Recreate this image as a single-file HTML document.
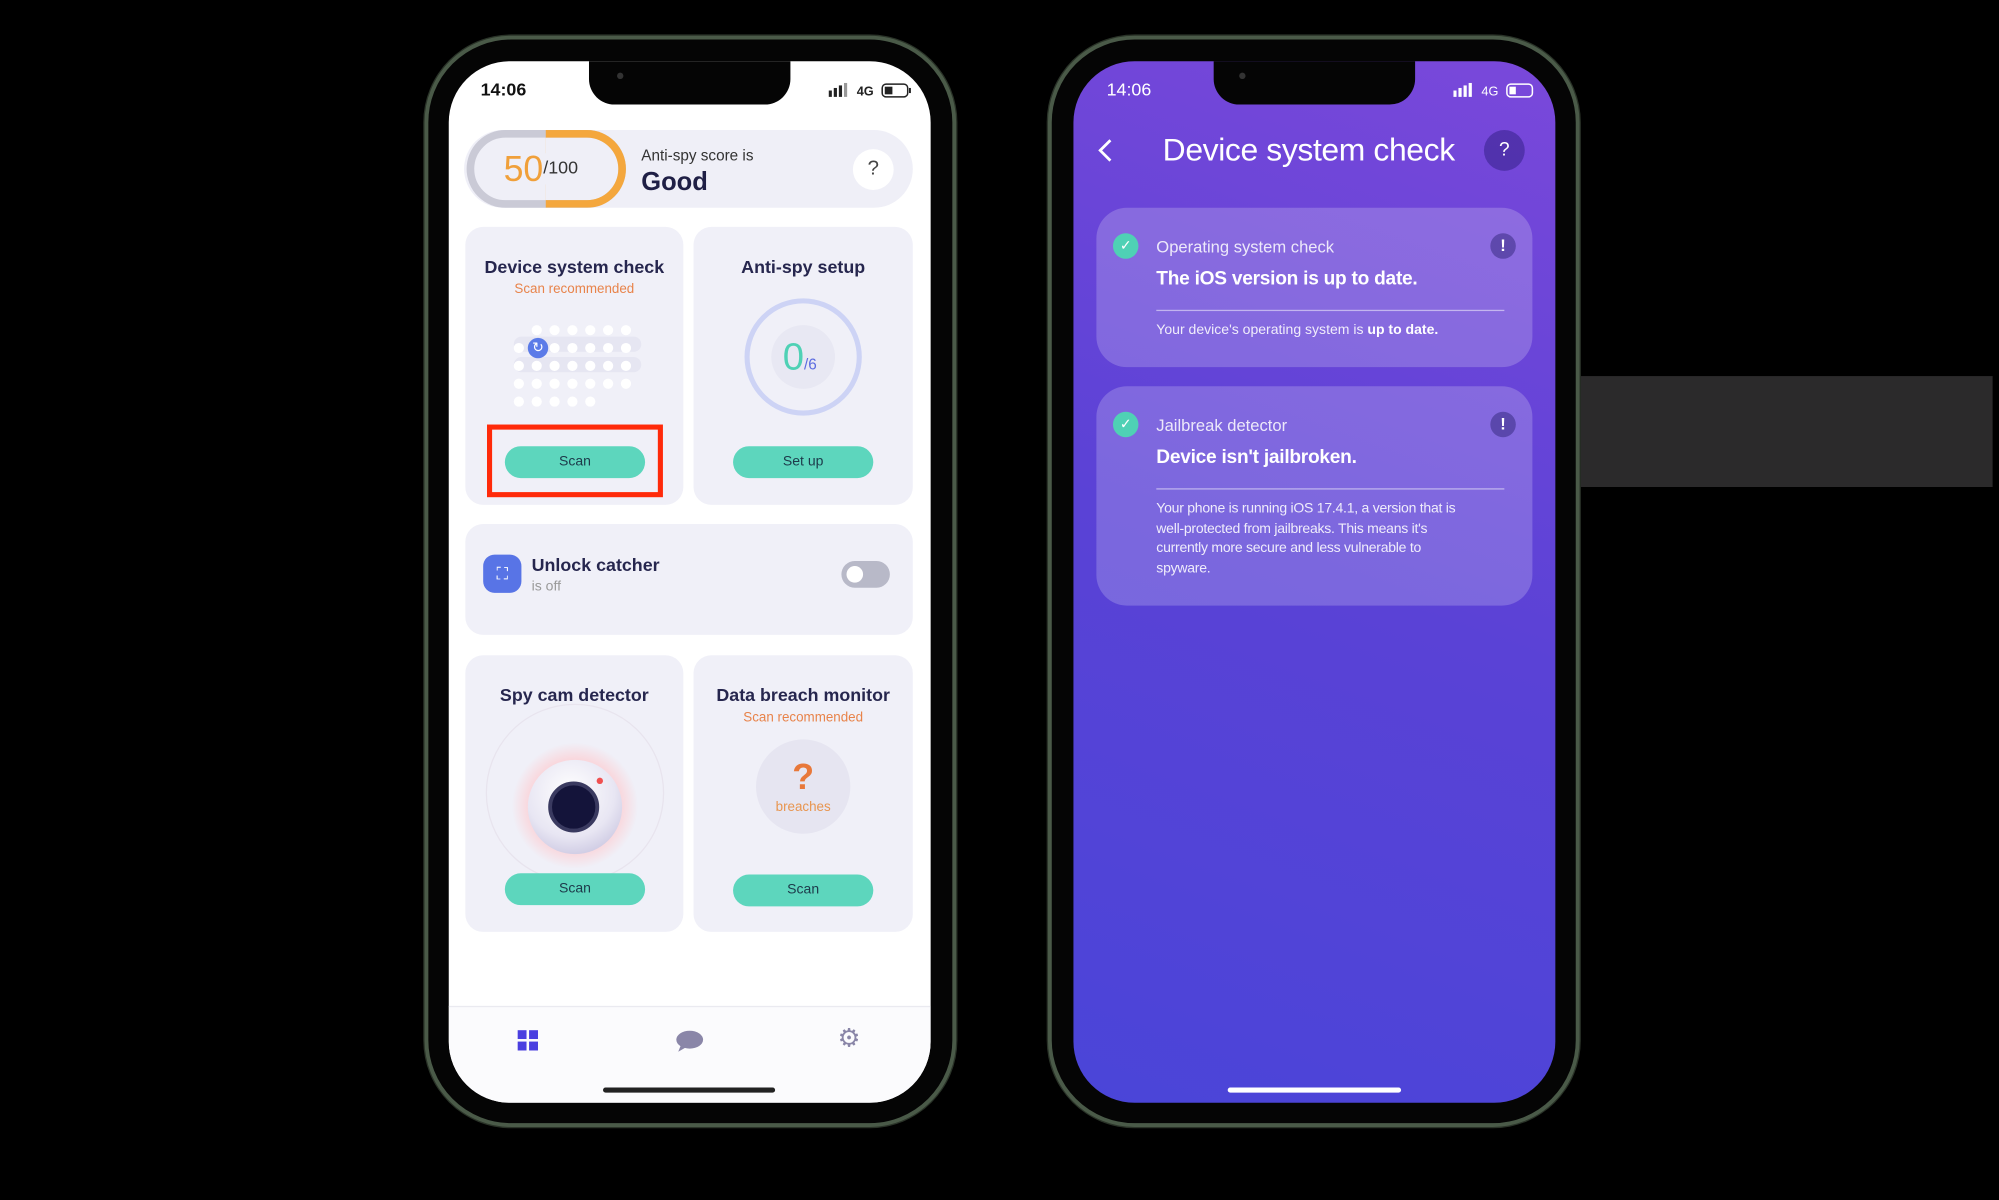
<!DOCTYPE html>
<html><head><meta charset="utf-8"><style>
*{margin:0;padding:0;box-sizing:border-box}
html,body{width:1999px;height:1200px;background:#000;overflow:hidden;font-family:"Liberation Sans",sans-serif}
#w{position:absolute;left:0;top:0;width:1568px;height:941px;transform:scale(1.27487);transform-origin:0 0}
.a{position:absolute}
.t{position:absolute;white-space:nowrap;line-height:1}
.frame{position:absolute;width:417px;height:856px;top:28px;border-radius:68px;background:#050505;border:3px solid #4a5a48;box-shadow:0 0 0 1px #2a3328}
.scr{position:absolute;top:48px;width:378px;height:817px;border-radius:48px;overflow:hidden}
.notch{position:absolute;top:-2px;left:110px;width:158px;height:36px;background:#050505;border-radius:0 0 20px 20px}
.card{position:absolute;background:#f0f0f8;border-radius:14px}
.ttl{position:absolute;width:100%;text-align:center;font-weight:bold;font-size:14px;color:#26264e;line-height:1}
.rec{position:absolute;width:100%;text-align:center;font-size:10.5px;color:#e8834a;line-height:1}
.btn{position:absolute;width:110px;height:25px;border-radius:13px;background:#5dd6bd;color:#1d3a4a;font-size:11px;text-align:center;line-height:25px}
.dot{position:absolute;width:8px;height:8px;border-radius:50%;background:#fff}
.rc{position:absolute;left:18px;width:342px;background:rgba(255,255,255,0.2);border-radius:24px}
.chk{position:absolute;left:13px;width:20px;height:20px;border-radius:50%;background:#4fd1b5;color:#fff;font-size:11px;text-align:center;line-height:20px}
.ex{position:absolute;left:309px;width:20px;height:20px;border-radius:50%;background:rgba(40,30,110,0.45);color:#fff;font-weight:bold;font-size:13px;text-align:center;line-height:20px}
</style></head><body><div id="w">

<div class="a" style="left:1240px;top:295px;width:323px;height:87px;background:#2b2a2b"></div>

<!-- LEFT PHONE -->
<div class="frame" style="left:333px"></div>
<div class="scr" style="left:352px;background:#fff">
  <div class="notch"></div>
  <div class="a" style="left:132px;top:9px;width:5px;height:5px;border-radius:50%;background:#333"></div>
  <div class="t" style="left:25px;top:15px;font-size:14px;font-weight:bold;color:#111">14:06</div>
  <svg class="a" style="left:298px;top:17px" width="66" height="12" viewBox="0 0 66 12">
    <g fill="#222"><rect x="0" y="6" width="2.5" height="5"/><rect x="4" y="4" width="2.5" height="7"/><rect x="8" y="2" width="2.5" height="9"/><rect x="12" y="0" width="2.5" height="11" fill="#999"/></g>
    <text x="22" y="10" font-size="10" font-family="Liberation Sans" font-weight="bold" fill="#222">4G</text>
    <rect x="42" y="1" width="20" height="10" rx="3" fill="none" stroke="#222" stroke-width="1.2"/><rect x="44" y="3" width="6" height="6" fill="#222"/><rect x="63" y="4" width="1.5" height="4" fill="#222"/>
  </svg>
  <div class="a" style="left:12px;top:54px;width:352px;height:61px;background:#efeff7;border-radius:31px"></div>
  <div class="a" style="left:14px;top:54px;width:125px;height:61px;border-radius:31px;border:6px solid #cacad6"></div>
  <div class="a" style="left:76px;top:54px;width:63px;height:61px;border-radius:0 31px 31px 0;border:6px solid #f4a73d;border-left:none"></div>
  <div class="t" style="left:43px;top:71px;font-size:28px;color:#f0a03a">50<span style="font-size:14px;color:#333;vertical-align:6px">/100</span></div>
  <div class="t" style="left:151px;top:68px;font-size:12px;color:#333">Anti-spy score is</div>
  <div class="t" style="left:151px;top:85px;font-size:20px;font-weight:bold;color:#1f1f45">Good</div>
  <div class="a" style="left:317px;top:69px;width:32px;height:32px;border-radius:50%;background:#fff;text-align:center;line-height:32px;font-size:16px;color:#444">?</div>

  <div class="card" style="left:13px;top:130px;width:171px;height:218px">
    <div class="ttl" style="top:24px">Device system check</div>
    <div class="rec" style="top:44px">Scan recommended</div>
    <div class="a" style="left:38px;top:86px;width:100px;height:12px;border-radius:6px;background:#e6e6f2"></div>
    <div class="a" style="left:38px;top:102px;width:100px;height:12px;border-radius:6px;background:#e6e6f2"></div>
    <div class="dot" style="left:52px;top:77px"></div><div class="dot" style="left:66px;top:77px"></div><div class="dot" style="left:80px;top:77px"></div><div class="dot" style="left:94px;top:77px"></div><div class="dot" style="left:108px;top:77px"></div><div class="dot" style="left:122px;top:77px"></div>
    <div class="dot" style="left:38px;top:91px"></div><div class="dot" style="left:66px;top:91px"></div><div class="dot" style="left:80px;top:91px"></div><div class="dot" style="left:94px;top:91px"></div><div class="dot" style="left:108px;top:91px"></div><div class="dot" style="left:122px;top:91px"></div>
    <div class="dot" style="left:38px;top:105px"></div><div class="dot" style="left:52px;top:105px"></div><div class="dot" style="left:66px;top:105px"></div><div class="dot" style="left:80px;top:105px"></div><div class="dot" style="left:94px;top:105px"></div><div class="dot" style="left:108px;top:105px"></div><div class="dot" style="left:122px;top:105px"></div>
    <div class="dot" style="left:38px;top:119px"></div><div class="dot" style="left:52px;top:119px"></div><div class="dot" style="left:66px;top:119px"></div><div class="dot" style="left:80px;top:119px"></div><div class="dot" style="left:94px;top:119px"></div><div class="dot" style="left:108px;top:119px"></div><div class="dot" style="left:122px;top:119px"></div>
    <div class="dot" style="left:38px;top:133px"></div><div class="dot" style="left:52px;top:133px"></div><div class="dot" style="left:66px;top:133px"></div><div class="dot" style="left:80px;top:133px"></div><div class="dot" style="left:94px;top:133px"></div>
    <div class="a" style="left:49px;top:87px;width:16px;height:16px;border-radius:50%;background:#5b7be8;color:#fff;font-size:11px;text-align:center;line-height:16px">↻</div>
    <div class="btn" style="left:31px;top:172px">Scan</div>
  </div>
  <div class="a" style="left:30px;top:285px;width:138px;height:57px;border:4px solid #ff2a0a"></div>

  <div class="card" style="left:192px;top:130px;width:172px;height:218px">
    <div class="ttl" style="top:24px">Anti-spy setup</div>
    <div class="a" style="left:40px;top:56px;width:92px;height:92px;border-radius:50%;border:4px solid #cdd3f5"></div>
    <div class="a" style="left:61px;top:77px;width:50px;height:50px;border-radius:50%;background:#e8e8f3"></div>
    <div class="t" style="left:70px;top:88px;font-size:30px;color:#4fd1b5">0<span style="font-size:12px;color:#5b6be0">/6</span></div>
    <div class="btn" style="left:31px;top:172px">Set up</div>
  </div>

  <div class="card" style="left:13px;top:363px;width:351px;height:87px">
    <div class="a" style="left:14px;top:24px;width:30px;height:30px;border-radius:9px;background:#5874e6;color:#fff;font-size:13px;text-align:center;line-height:30px">⛶</div>
    <div class="t" style="left:52px;top:25px;font-size:14px;font-weight:bold;color:#26264e">Unlock catcher</div>
    <div class="t" style="left:52px;top:44px;font-size:11px;color:#999">is off</div>
    <div class="a" style="left:295px;top:29px;width:38px;height:21px;border-radius:11px;background:#b8b9c8"></div>
    <div class="a" style="left:299px;top:33px;width:13px;height:13px;border-radius:50%;background:#fff"></div>
  </div>

  <div class="card" style="left:13px;top:466px;width:171px;height:217px;overflow:hidden">
    <div class="a" style="left:16px;top:38px;width:140px;height:140px;border-radius:50%;border:1px solid #e8e4ee"></div>
    <div class="a" style="left:36px;top:68px;width:100px;height:100px;border-radius:50%;background:radial-gradient(circle,#ffc8cc 40%,rgba(255,200,205,0) 70%)"></div>
    <div class="a" style="left:49px;top:82px;width:74px;height:74px;border-radius:50%;background:radial-gradient(circle at 45% 35%,#fff,#e8e6f3 55%,#b9b4d6)"></div>
    <div class="a" style="left:65px;top:99px;width:40px;height:40px;border-radius:50%;background:#14143a;border:3px solid #3a3a60"></div>
    <div class="a" style="left:103px;top:96px;width:5px;height:5px;border-radius:50%;background:#f05050"></div>
    <div class="ttl" style="top:24px">Spy cam detector</div>
    <div class="btn" style="left:31px;top:171px">Scan</div>
  </div>

  <div class="card" style="left:192px;top:466px;width:172px;height:217px">
    <div class="ttl" style="top:24px">Data breach monitor</div>
    <div class="rec" style="top:44px">Scan recommended</div>
    <div class="a" style="left:49px;top:66px;width:74px;height:74px;border-radius:50%;background:#e6e5f1"></div>
    <div class="t" style="left:0;width:172px;text-align:center;top:82px;font-size:28px;font-weight:bold;color:#e8783a">?</div>
    <div class="t" style="left:0;width:172px;text-align:center;top:114px;font-size:10.5px;color:#e8954f">breaches</div>
    <div class="btn" style="left:31px;top:172px">Scan</div>
  </div>

  <div class="a" style="left:0;top:741px;width:378px;height:76px;background:#fbfbfd;border-top:1px solid #eaeaf0"></div>
  <svg class="a" style="left:54px;top:760px" width="16" height="16"><g fill="#4a3fe0"><rect x="0" y="0" width="7" height="7"/><rect x="9" y="0" width="7" height="7"/><rect x="0" y="9" width="7" height="7"/><rect x="9" y="9" width="7" height="7"/></g></svg>
  <svg class="a" style="left:178px;top:760px" width="22" height="18"><ellipse cx="11" cy="7.5" rx="10.5" ry="7" fill="#8a86a8"/><path d="M4 12 L2 17 L9 13Z" fill="#8a86a8"/></svg>
  <div class="t" style="left:305px;top:757px;font-size:20px;color:#8a86a8">⚙</div>
  <div class="a" style="left:121px;top:805px;width:135px;height:4px;border-radius:2px;background:#222"></div>
</div>

<!-- RIGHT PHONE -->
<div class="frame" style="left:822px"></div>
<div class="scr" style="left:842px;background:linear-gradient(20deg,#4a45d8 0%,#5a42d6 50%,#7a48da 100%)">
  <div class="notch"></div>
  <div class="a" style="left:130px;top:9px;width:5px;height:5px;border-radius:50%;background:#333"></div>
  <div class="t" style="left:26px;top:15px;font-size:14px;color:#fff">14:06</div>
  <svg class="a" style="left:298px;top:17px" width="66" height="12" viewBox="0 0 66 12">
    <g fill="#fff"><rect x="0" y="6" width="2.5" height="5"/><rect x="4" y="4" width="2.5" height="7"/><rect x="8" y="2" width="2.5" height="9"/><rect x="12" y="0" width="2.5" height="11"/></g>
    <text x="22" y="10" font-size="10" font-family="Liberation Sans" fill="#fff">4G</text>
    <rect x="42" y="1" width="20" height="10" rx="3" fill="none" stroke="#fff" stroke-width="1.2"/><rect x="44" y="3" width="5" height="6" fill="#fff"/>
  </svg>
  <svg class="a" style="left:18px;top:60px" width="14" height="20"><path d="M11 2 L3 10 L11 18" fill="none" stroke="#fff" stroke-width="2.2"/></svg>
  <div class="t" style="left:70px;top:58px;font-size:25px;color:#fff;letter-spacing:-0.3px">Device system check</div>
  <div class="a" style="left:322px;top:54px;width:32px;height:32px;border-radius:50%;background:rgba(40,25,120,0.45);color:#fff;text-align:center;line-height:32px;font-size:15px">?</div>

  <div class="rc" style="top:115px;height:125px">
    <div class="chk" style="top:20px">✓</div>
    <div class="t" style="left:47px;top:24px;font-size:13px;color:rgba(255,255,255,0.85)">Operating system check</div>
    <div class="t" style="left:47px;top:48px;font-size:15px;font-weight:bold;color:#fff;letter-spacing:-0.2px">The iOS version is up to date.</div>
    <div class="a" style="left:47px;top:80px;width:273px;height:1px;background:rgba(255,255,255,0.5)"></div>
    <div class="t" style="left:47px;top:91px;font-size:11px;color:rgba(255,255,255,0.88)">Your device's operating system is <b style="color:#fff">up to date.</b></div>
    <div class="ex" style="top:20px">!</div>
  </div>

  <div class="rc" style="top:255px;height:172px">
    <div class="chk" style="top:20px">✓</div>
    <div class="t" style="left:47px;top:24px;font-size:13px;color:rgba(255,255,255,0.85)">Jailbreak detector</div>
    <div class="t" style="left:47px;top:48px;font-size:15px;font-weight:bold;color:#fff;letter-spacing:-0.2px">Device isn't jailbroken.</div>
    <div class="a" style="left:47px;top:80px;width:273px;height:1px;background:rgba(255,255,255,0.5)"></div>
    <div class="a" style="left:47px;top:89px;width:290px;white-space:nowrap;font-size:11px;letter-spacing:-0.2px;line-height:15.5px;color:rgba(255,255,255,0.88)">Your phone is running iOS 17.4.1, a version that is<br>well-protected from jailbreaks. This means it's<br>currently more secure and less vulnerable to<br>spyware.</div>
    <div class="ex" style="top:20px">!</div>
  </div>
  <div class="a" style="left:121px;top:805px;width:136px;height:4px;border-radius:2px;background:#fff"></div>
</div>

</div></body></html>
